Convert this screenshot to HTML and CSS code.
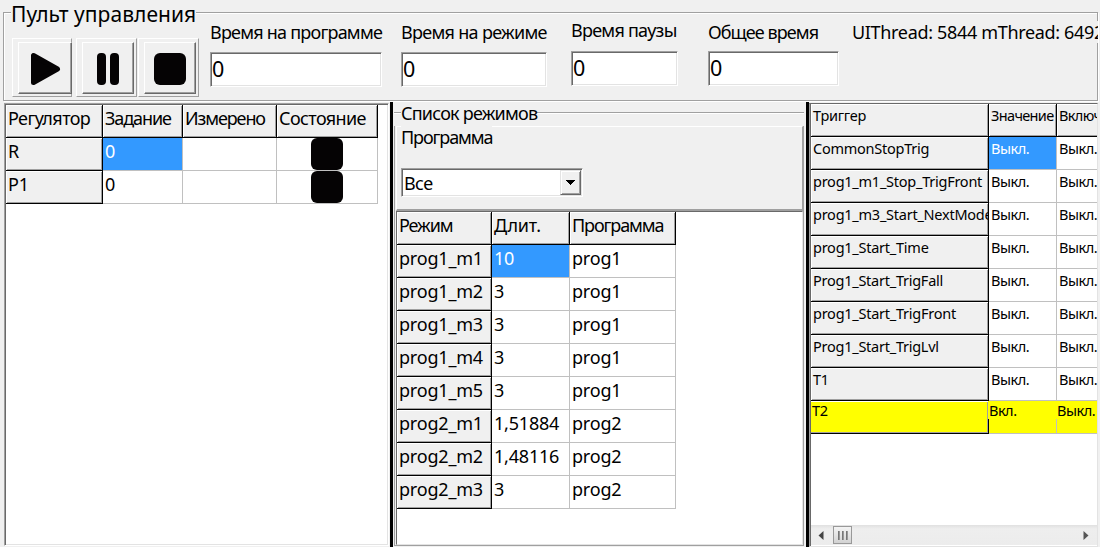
FILE: index.html
```
<!DOCTYPE html>
<html lang="ru">
<head>
<meta charset="utf-8">
<title>Пульт управления</title>
<link rel="stylesheet" href="styles.css">
</head>
<body>
<div class="window">
  <header class="console">
    <div class="console-frame"></div>
    <h1 class="console-title">Пульт управления</h1>
    <div class="console-row">
      <div class="key-box key-box-play"><button class="key"><svg width="50" height="50" viewBox="0 0 50 50"><path d="M14.500 12.500v27l24-13.500z" fill="#050304" stroke="#050304" stroke-width="5" stroke-linejoin="round"/></svg></button></div>
      <div class="key-box key-box-pause"><button class="key"><svg width="50" height="50" viewBox="0 0 50 50"><rect x="14" y="10" width="9" height="32" rx="4" fill="#050304"/><rect x="27" y="10" width="9" height="32" rx="4" fill="#050304"/></svg></button></div>
      <div class="key-box key-box-stop"><button class="key"><svg width="50" height="50" viewBox="0 0 50 50"><rect x="9" y="10" width="32" height="32" rx="6" fill="#050304"/></svg></button></div>
      <div class="field field-program"><span class="label">Время на программе</span><div class="edit">0</div></div>
      <div class="field field-mode"><span class="label">Время на режиме</span><div class="edit">0</div></div>
      <div class="field field-pause"><span class="label">Время паузы</span><div class="edit">0</div></div>
      <div class="field field-total"><span class="label">Общее время</span><div class="edit">0</div></div>
      <div class="threads">UIThread: 5844 mThread: 6492</div>
    </div>
  </header>
  <main class="panes">
    <section class="pane regulators">
      <div class="grid grid-regulators">
        <div class="fixed snug">Регулятор</div><div class="fixed tight">Задание</div><div class="fixed tight">Измерено</div><div class="fixed snug">Состояние</div>
        <div class="fixed">R</div><div class="cell selected">0</div><div class="cell"></div><div class="cell state"><i class="lamp"></i></div>
        <div class="fixed">P1</div><div class="cell">0</div><div class="cell"></div><div class="cell state"><i class="lamp"></i></div>
      </div>
    </section>
    <div class="splitter"></div>
    <section class="modes">
      <h2 class="modes-title"><span>Список режимов</span></h2>
      <div class="modes-body">
        <div class="filter">
          <span class="filter-label tight">Программа</span>
          <div class="combo"><span class="combo-value snug">Все</span><span class="combo-button"><svg width="9" height="5" viewBox="0 0 9 5" shape-rendering="crispEdges"><path d="M0 0h9L4.5 5z"/></svg></span></div>
        </div>
        <div class="mode-list">
          <div class="grid grid-modes">
            <div class="fixed tight">Режим</div><div class="fixed">Длит.</div><div class="fixed tight">Программа</div>
            <div class="fixed">prog1_m1</div><div class="cell selected">10</div><div class="cell">prog1</div>
            <div class="fixed">prog1_m2</div><div class="cell">3</div><div class="cell">prog1</div>
            <div class="fixed">prog1_m3</div><div class="cell">3</div><div class="cell">prog1</div>
            <div class="fixed">prog1_m4</div><div class="cell">3</div><div class="cell">prog1</div>
            <div class="fixed">prog1_m5</div><div class="cell">3</div><div class="cell">prog1</div>
            <div class="fixed">prog2_m1</div><div class="cell">1,51884</div><div class="cell">prog2</div>
            <div class="fixed">prog2_m2</div><div class="cell">1,48116</div><div class="cell">prog2</div>
            <div class="fixed">prog2_m3</div><div class="cell">3</div><div class="cell">prog2</div>
          </div>
        </div>
      </div>
    </section>
    <div class="splitter"></div>
    <section class="pane triggers">
      <div class="grid grid-triggers">
        <div class="fixed">Триггер</div><div class="fixed value-head">Значение</div><div class="fixed value-head">Включен</div>
        <div class="fixed">CommonStopTrig</div><div class="cell selected">Выкл.</div><div class="cell">Выкл.</div>
        <div class="fixed">prog1_m1_Stop_TrigFront</div><div class="cell">Выкл.</div><div class="cell">Выкл.</div>
        <div class="fixed">prog1_m3_Start_NextMode</div><div class="cell">Выкл.</div><div class="cell">Выкл.</div>
        <div class="fixed">prog1_Start_Time</div><div class="cell">Выкл.</div><div class="cell">Выкл.</div>
        <div class="fixed">Prog1_Start_TrigFall</div><div class="cell">Выкл.</div><div class="cell">Выкл.</div>
        <div class="fixed">prog1_Start_TrigFront</div><div class="cell">Выкл.</div><div class="cell">Выкл.</div>
        <div class="fixed">Prog1_Start_TrigLvl</div><div class="cell">Выкл.</div><div class="cell">Выкл.</div>
        <div class="fixed">T1</div><div class="cell">Выкл.</div><div class="cell">Выкл.</div>
        <div class="fixed active">T2</div><div class="cell active"><span class="mark">Вкл.</span></div><div class="cell active"><span class="mark">Выкл.</span></div>
      </div>
      <div class="scrollbar">
        <svg class="arrow" width="6" height="9" viewBox="0 0 6 9"><path d="M5.500 0v9L.5 4.500z" fill="#444"/></svg>
        <span class="thumb"><i></i><i></i><i></i></span>
        <svg class="arrow arrow-right" width="6" height="9" viewBox="0 0 6 9"><path d="M.5 0v9l5-4.500z" fill="#555"/></svg>
      </div>
    </section>
  </main>
</div>
</body>
</html>
```

FILE: styles.css
```
* { box-sizing: border-box; }

body {
  margin: 0;
  background: #f0f0f0;
  color: #000;
  font: 18px/22px "Noto Sans", sans-serif;
  letter-spacing: -0.2px;
}

.window {
  display: flex;
  flex-direction: column;
  width: 1100px;
  height: 547px;
  overflow: hidden;
}

.snug { letter-spacing: -0.6px; }
.tight { letter-spacing: -1.1px; }

/* Control console */
.console { position: relative; height: 102px; flex: none; overflow: hidden; }

.console-frame {
  position: absolute;
  left: 3px;
  top: 12px;
  width: 1095px;
  height: 89px;
  border: 1px solid #a0a0a0;
  box-shadow: inset 1px 1px #fff, 1px 1px #fff;
}

.console-title {
  position: relative;
  width: 185px;
  height: 26px;
  margin: 0 0 0 11px;
  padding-top: 1px;
  background: #f0f0f0;
  font-size: 21px;
  font-weight: normal;
  line-height: 26px;
  letter-spacing: 0.05px;
  white-space: nowrap;
}

.console-row {
  position: relative;
  display: flex;
  align-items: flex-start;
  padding-left: 12px;
  width: 1100px;
  height: 73px;
}

.key-box {
  flex: none;
  width: 60px;
  height: 59px;
  margin-top: 12px;
  padding: 3px 0 0 5px;
  border: 1px solid;
  border-color: #fff #a0a0a0 #a0a0a0 #fff;
}
.key-box-pause { width: 61px; margin-left: 4px; }
.key-box-stop { width: 61px; margin-left: 1px; }

.key {
  display: block;
  width: 54px;
  height: 52px;
  padding: 0;
  border: 1px solid;
  border-color: #fff #696969 #696969 #fff;
  box-shadow: inset -1px -1px #a0a0a0;
  background: #f0f0f0;
}
.key-box-pause .key, .key-box-stop .key { width: 52px; }
.key svg { display: block; margin-top: 0; }

.field { flex: none; display: flex; flex-direction: column; white-space: nowrap; }
.field-program { width: 172px; margin-left: 11px; letter-spacing: -0.78px; }
.field-mode { width: 146px; margin-left: 19px; letter-spacing: -0.7px; }
.field-pause { width: 107px; margin-left: 24px; letter-spacing: -0.75px; }
.field-total { width: 131px; margin-left: 30px; letter-spacing: -0.93px; }
.label { height: 31px; margin-top: -5px; }
.field-pause .label { margin-top: -7px; height: 32px; }
.field-total .label { height: 30px; }

.edit {
  height: 35px;
  padding-left: 1px;
  border: 1px solid;
  border-color: #a0a0a0 #fff #fff #a0a0a0;
  box-shadow: inset 1px 1px #696969, inset -1px -1px #e3e3e3;
  background: #fff;
  font-size: 21.5px;
  line-height: 32px;
}

.threads {
  flex: none;
  width: 246px;
  margin: -5px 0 0 13px;
  overflow: hidden;
  background: #f0f0f0;
  letter-spacing: -0.33px;
  white-space: nowrap;
}

/* Panes */
.panes { flex: none; display: flex; height: 445px; padding-left: 4px; }
.splitter { flex: none; width: 3px; background: #000; }

.pane {
  flex: none;
  border: 1px solid;
  border-color: #a0a0a0 #fff #fff #a0a0a0;
  background: #fff;
  overflow: hidden;
}
.regulators { width: 385px; height: 443px; margin: 1px 1px 0 0; padding: 1px; box-shadow: inset 1px 1px #696969, inset -1px -1px #e3e3e3; }

/* String grids */
.grid { display: grid; grid-auto-rows: 33px; width: max-content; }
.grid-regulators { grid-template-columns: 97px 80px 94px 101px; }
.grid-modes { grid-template-columns: 95px 78px 106px; }
.grid-triggers { grid-template-columns: 178px 68px 80px; }

.fixed, .cell {
  padding: 2px 0 0 2px;
  border-right: 1px solid #c0c0c0;
  border-bottom: 1px solid #c0c0c0;
  overflow: hidden;
  white-space: nowrap;
}
.fixed {
  border-color: #000;
  background: #f0f0f0;
  box-shadow: inset 1px 1px #fff, inset -1px -1px #a0a0a0;
}
.selected { background: #39f; color: #fff; }
.state { padding: 0 0 0 34px; }
.lamp { display: block; width: 32px; height: 32px; border-radius: 6px; background: #050304; }

/* Mode list */
.modes { flex: none; display: flex; flex-direction: column; width: 413px; padding: 0 2px 0 1px; }
.modes-title {
  display: flex;
  flex: none;
  height: 24px;
  margin: 0;
  padding-left: 7px;
  font-size: 18px;
  font-weight: normal;
  line-height: 22px;
  letter-spacing: -0.78px;
  background: linear-gradient(#a0a0a0, #a0a0a0) 0 10px / 411px 1px no-repeat, linear-gradient(#fff, #fff) 0 11px / 411px 1px no-repeat;
}
.modes-title span { background: #f0f0f0; }
.modes-body {
  flex: none;
  height: 420px;
  border: solid #a0a0a0;
  border-width: 0 1px 1px;
}
.filter {
  height: 85px;
  margin-left: 1px;
  padding: 0 0 0 4px;
  border-top: 1px solid #fff;
  border-left: 1px solid #fff;
  border-right: 1px solid #a0a0a0;
  border-bottom: 2px solid #a0a0a0;
}
.filter-label { display: block; width: 91px; height: 42px; margin-top: -1px; background: #f0f0f0; }
.combo {
  display: flex;
  justify-content: space-between;
  width: 182px;
  height: 29px;
  padding: 1px;
  border: 1px solid;
  border-color: #a0a0a0 #fff #fff #a0a0a0;
  box-shadow: inset 1px 1px #696969, inset -1px -1px #e3e3e3;
  background: #fff;
}
.combo-value { padding-left: 1px; line-height: 26px; }
.combo-button {
  display: flex;
  align-items: center;
  justify-content: center;
  width: 21px;
  height: 25px;
  padding-right: 1px;
  border: 1px solid;
  border-color: #e3e3e3 #696969 #696969 #e3e3e3;
  box-shadow: inset 1px 1px #fff, inset -1px -1px #a0a0a0;
  background: #f0f0f0;
}
.mode-list {
  height: 334px;
  margin-left: 1px;
  border: 1px solid;
  border-color: #696969 #e3e3e3 #e3e3e3 #696969;
  background: #fff;
}

/* Triggers */
.triggers {
  display: flex;
  flex-direction: column;
  width: 289px;
  height: 444px;
  margin-top: 1px;
  padding-left: 1px;
  border-color: #696969 #e3e3e3 #e3e3e3 #a0a0a0;
  box-shadow: inset 1px 0 #696969;
}
.grid-triggers { flex: none; font-size: 14.5px; line-height: 18px; letter-spacing: -0.25px; }
.grid-triggers .cell { letter-spacing: -0.5px; }
.value-head { letter-spacing: -0.65px; }
.active { padding: 0; background-color: #ff0; line-height: 18px; }
.fixed.active { padding-left: 1px; box-shadow: inset 0 1px #fff, inset -1px -1px #a0a0a0; }
.mark { position: relative; display: block; height: 18px; }
.cell.active { overflow: visible; }
.cell.active .mark { margin-left: -1px; padding-left: 1px; background: #ff0; }
.scrollbar {
  display: flex;
  align-items: center;
  height: 20px;
  margin-top: auto;
  margin-bottom: 1px;
  padding: 0 8px 0 7px;
  background: linear-gradient(#e0e0e0, #eee 20%, #ececec);
}
.thumb {
  display: flex;
  align-items: center;
  justify-content: center;
  gap: 2px;
  width: 19px;
  height: 18px;
  margin-left: 9px;
  border: 1px solid #999;
  background: linear-gradient(#f4f4f4, #e4e4e4 50%, #d2d2d2);
}
.thumb i { width: 2px; height: 9px; background: linear-gradient(90deg, #666, #aaa); }
.arrow-right { margin-left: auto; }
```
